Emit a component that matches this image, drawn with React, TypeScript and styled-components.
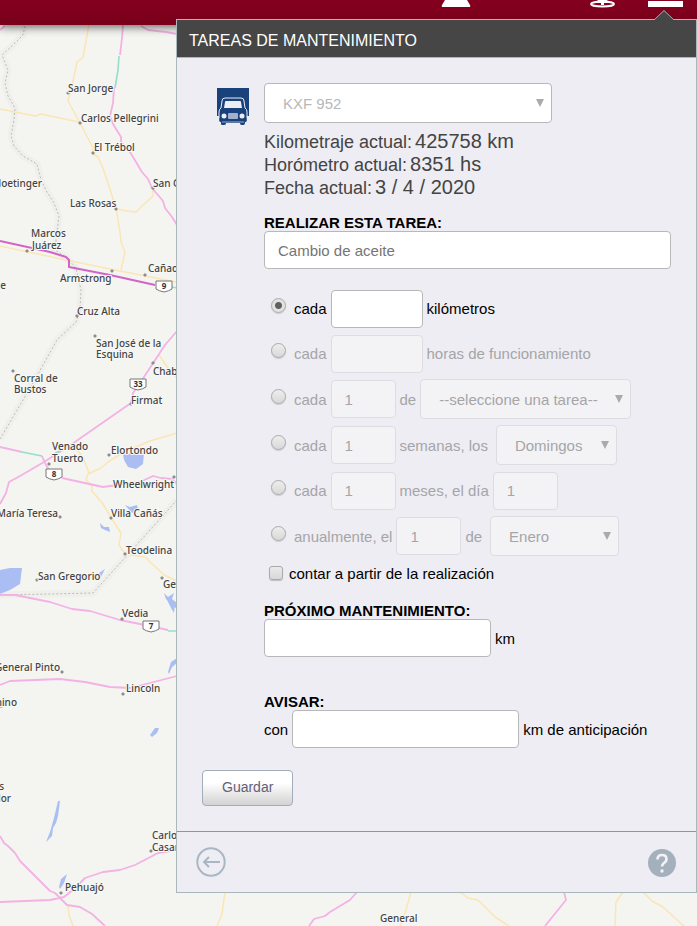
import React, { useState } from "react";
import styled, { createGlobalStyle } from "styled-components";

const GlobalStyle = createGlobalStyle`
  *, *::before, *::after { box-sizing: border-box; }
  body {
    margin: 0;
    background: #f4f5f0;
    font-family: "Liberation Sans", Arial, sans-serif;
    font-size: 15px;
    line-height: 17px;
    color: #000;
  }
  input, select, button { font: inherit; margin: 0; }
`;

const Page = styled.div`
  position: relative;
  min-height: 100vh;
  overflow: hidden;
  padding: 19px 0 33px 176px;
`;

const Backdrop = styled.div`
  position: absolute;
  inset: 0;
  isolation: isolate;
  display: flex;
  flex-direction: column;
`;

const TopBar = styled.header`
  flex: none;
  z-index: 1;
  display: flex;
  justify-content: flex-end;
  align-items: flex-start;
  height: 25px;
  padding-right: 14px;
  background: linear-gradient(#85001f, #780019);
  box-shadow: 0 2px 10px rgba(0, 0, 0, 0.6);
`;

const NavButton = styled.button<{ $gap?: number }>`
  display: block;
  padding: 0;
  margin-right: ${(p) => p.$gap ?? 0}px;
  border: 0;
  background: none;
  svg { display: block; }
`;

const MapArea = styled.div`
  position: absolute;
  inset: 0;
  svg { display: block; width: 100%; height: 100%; }
`;

const MapLabels = styled.g`
  font-family: "Noto Sans", sans-serif;
  font-size: 10px;
  font-weight: 500;
  fill: #444;
  paint-order: stroke;
  stroke: #f8f8f5;
  stroke-width: 2px;
`;

const Panel = styled.main`
  position: relative;
  border: 1px solid #a9b8bc;
  background: #eeedf3;
`;

const Notch = styled.svg`
  position: absolute;
  top: -10px;
  right: 22px;
`;

const TitleBar = styled.h1`
  margin: 0;
  padding: 12px 12px 7px;
  border-bottom: 1px solid #a9b8bc;
  background: #464646;
  color: #fff;
  font-size: 16px;
  font-weight: 400;
  line-height: 18px;
`;

const Form = styled.form`
  padding: 25px;
  border-bottom: 1px solid #8e969b;
`;

const Columns = styled.div`
  display: grid;
  grid-template-columns: 32px minmax(0, 1fr);
  column-gap: 15px;
  padding-left: 15px;
`;

const VehicleIcon = styled.svg`
  display: block;
  margin-top: 5px;
`;

const Readings = styled.dl`
  margin: 7px 0 15px;
  color: #444;
  font-size: 18px;
  line-height: 23px;
`;

const Reading = styled.div`
  display: flex;
  align-items: baseline;
  gap: 3px;
  height: 23px;
  dt, dd { margin: 0; }
  dd { font-size: 20px; }
`;

const Heading = styled.label`
  display: block;
  font-weight: 700;
`;

const TextBox = styled.input<{ $width?: string }>`
  display: block;
  flex: none;
  width: ${(p) => p.$width ?? "100%"};
  height: 38px;
  padding: 0 13px;
  border: 1px solid #b8b8b8;
  border-radius: 4px;
  background: #fff;
  color: #555;
  outline: none;
  &::placeholder { color: #757575; opacity: 1; }
  &:disabled {
    border-color: #dddde1;
    background: #f3f3f5;
    color: #a5a5a8;
  }
`;

const SelectWrap = styled.span<{ $width: number; $gap?: number }>`
  position: relative;
  display: block;
  flex: none;
  width: ${(p) => p.$width}px;
  max-width: 100%;
  margin-left: ${(p) => p.$gap ?? 0}px;
  color: #aaa;
  select {
    display: block;
    appearance: none;
    width: 100%;
    height: 40px;
    padding: 0 18px;
    border: 1px solid #b8b8b8;
    border-radius: 4px;
    background: #fff;
    color: #b8b8b8;
    outline: none;
    opacity: 1;
  }
  select:disabled {
    border-color: #dddde1;
    background: #f3f3f5;
    color: #a5a5a8;
  }
  svg {
    position: absolute;
    top: 16px;
    right: 8px;
    pointer-events: none;
  }
`;

const Schedule = styled.fieldset`
  margin: 17px 0 0;
  padding: 0;
  border: 0;
`;

const Row = styled.div<{ $muted?: boolean }>`
  display: flex;
  align-items: center;
  gap: 4px;
  min-height: 45px;
  padding: 3px 0;
  color: ${(p) => (p.$muted ? "#a5a5a8" : "#000")};
  white-space: nowrap;
`;

const Choice = styled.label`
  display: flex;
  align-items: center;
  gap: 8px;
  padding-left: 7px;
`;

const Radio = styled.input`
  appearance: none;
  width: 15px;
  height: 15px;
  margin-bottom: 6px;
  border: 1px solid #aaa;
  border-radius: 50%;
  background: linear-gradient(#eee, #d8d8d8);
  box-shadow: 0 1px 1px rgba(0, 0, 0, 0.15);
  &:checked {
    background: radial-gradient(circle, #606060 0 3px, #e2e2e2 4px);
  }
`;

const CheckLabel = styled.label`
  display: flex;
  align-items: center;
  gap: 6px;
  height: 28px;
  padding-left: 5px;
`;

const Checkbox = styled.input`
  appearance: none;
  width: 14px;
  height: 14px;
  border: 1px solid #aaa;
  border-radius: 3px;
  background: linear-gradient(#eaeaea, #d8d8d8);
  box-shadow: 0 1px 1px rgba(0, 0, 0, 0.2);
  &:checked { background: #606060; }
`;

const Section = styled.section<{ $top: number }>`
  margin-top: ${(p) => p.$top}px;
`;

const Inline = styled.div`
  display: flex;
  align-items: center;
  gap: 4px;
`;

const SaveButton = styled.button`
  display: block;
  height: 36px;
  margin-top: 22px;
  padding: 0 19px 2px;
  border: 1px solid #a3adb9;
  border-radius: 4px;
  background: linear-gradient(#fff 35%, #d2d2d2);
  color: #62607a;
  font-size: 14px;
`;

const Footer = styled.footer`
  display: flex;
  justify-content: space-between;
  align-items: center;
  padding: 15px 19px;
`;

const IconButton = styled.button`
  display: block;
  padding: 0;
  border: 0;
  background: none;
  svg { display: block; }
`;

type Label = [text: string, x: number, y: number, anchor?: "end"];

const places: Label[] = [
  ["San Jorge", 68, 92],
  ["Carlos Pellegrini", 81, 122],
  ["El Trébol", 94, 151],
  ["Noetinger", 42, 187, "end"],
  ["San Genaro", 153, 187],
  ["Las Rosas", 70, 207],
  ["Marcos", 31, 237],
  ["Juárez", 32, 249],
  ["Cañada de", 148, 272],
  ["Armstrong", 60, 282],
  ["Leones e", 6, 289, "end"],
  ["Cruz Alta", 77, 315],
  ["San José de la", 96, 347],
  ["Esquina", 96, 358],
  ["Chabás", 153, 375],
  ["Corral de", 14, 382],
  ["Bustos", 14, 393],
  ["Firmat", 131, 404],
  ["Venado", 52, 450],
  ["Tuerto", 52, 462],
  ["Elortondo", 111, 454],
  ["Wheelwright", 113, 488],
  ["María Teresa", 58, 517, "end"],
  ["Villa Cañás", 111, 517],
  ["Teodelina", 126, 554],
  ["San Gregorio", 38, 580],
  ["General", 163, 588],
  ["Vedia", 122, 617],
  ["General Pinto", 60, 671, "end"],
  ["Lincoln", 126, 692],
  ["Ameghino", 17, 706, "end"],
  ["Trenques", 4, 790, "end"],
  ["Salvador", 11, 802, "end"],
  ["Carlos", 152, 839],
  ["Casares", 152, 851],
  ["Pehuajó", 65, 891],
  ["General", 380, 922],
];

const yellowRoads = [
  "M89 25L83 57L77 62L72 86L68 101L79 121L93 148L93 154L98 157L103 168L116 208L120 232L121 242L125 252L121 270",
  "M0 109L35 116L41 114L79 122",
  "M117 209L127 211L136 212L153 196V189",
  "M0 246L66 260L120 271L176 282",
  "M177 433L150 441L124 452L108 462L101 468L88 474L86 480L92 486L92 491L103 504L112 519L121 533L119 545L125 554L145 557L164 575L177 581",
  "M75 446L84 460L89 473",
  "M159 355L168 368L177 378",
  "M68 906L69 915L73 926",
  "M225 892L222 914L217 926",
  "M411 892L406 910L400 926",
  "M460 892L468 898L478 900L495 917L509 926",
  "M623 892L616 902L615 926",
  "M643 892L652 901L663 907L676 919L684 926",
];

const pinkRoads = [
  "M123 25L122 38L120 55",
  "M114 88L113 103L110 116L113 124L121 137V142L130 152L142 172L148 179L152 188L163 201L165 208L172 217L177 225",
  "M141 26L148 30L166 32L177 34",
  "M0 30L5 26",
  "M177 331L165 345L142 380L133 393L131 403L72 444L44 462L20 476L9 482L6 493L0 504",
  "M0 447L22 452M42 456L45 463L50 472",
  "M62 478L103 487L140 482L153 476L161 478L172 479L177 484",
  "M0 595L15 595L50 602L72 609L90 611L120 620L140 624L168 630",
  "M0 685L10 681L60 679L85 682L110 687L130 688L150 683L177 676",
  "M0 836L4 843L8 846L15 853L20 861L50 891L55 893L67 905L80 907L92 914L105 926",
  "M0 902L50 900L64 897L74 889L85 878L103 872L120 870L135 865L158 853L177 850",
  "M357 892L350 900L330 912L325 916L314 919L309 926",
  "M564 892L566 900L545 926",
];

const borderLine =
  "M25 26L23 35L13 45L2 55L8 70L5 83L8 96L15 108L14 120L11 136L14 146L23 156L37 164L41 180L47 192L54 203L59 216L57 232L55 250L67 258L76 268L81 290L80 310L76 322L57 340L33 383L0 439M177 500L150 530L93 593L50 594L0 595";

const lakes = [
  "M123 454L144 453L143 464L136 469L128 467L124 460Z",
  "M125 505L130 507L137 505L138 509L132 513Z",
  "M100 523L104 527L109 527L110 532L105 530L101 528Z",
  "M0 570L10 568L22 568L20 584L10 590L0 594Z",
  "M98 580L99 573L105 569L101 577Z",
  "M164 593L168 597L174 593L172 599L177 603V609L172 605L166 599Z",
  "M167 600L172 601L175 604L174 613L171 608Z",
  "M168 672L171 662L177 658V663L172 667L169 674Z",
  "M150 735L155 728L159 728L157 733L152 737Z",
  "M58 801H60L58 816L56 823L53 828L52 836L46 842L50 832L54 818Z",
  "M59 887L61 879L67 874L64 883L60 889Z",
  "M0 706L4 705L2 708L0 708Z",
];

const towns = [
  [68, 93], [80, 123], [93, 153], [153, 188], [116, 209], [27, 251], [112, 271], [145, 275],
  [77, 316], [95, 336], [13, 371], [131, 404], [153, 363], [49, 464], [109, 455], [174, 477],
  [60, 517], [111, 518], [125, 554], [37, 580], [162, 578], [122, 619], [62, 672], [123, 694],
  [151, 851], [61, 893],
];

function Shield({ x, y, n }: { x: number; y: number; n: string }) {
  return (
    <g transform={`translate(${x} ${y})`}>
      <path d="M-8 -5H8V3Q5 5 0 6Q-5 5 -8 3Z" fill="#fff" stroke="#777" />
      <text y="3" textAnchor="middle" fontSize="8" fontWeight="700" fontFamily="Noto Sans, sans-serif" fill="#333">
        {n}
      </text>
    </g>
  );
}

function MapDrawing() {
  return (
    <svg viewBox="0 0 697 926" preserveAspectRatio="xMinYMin slice" aria-label="Mapa">
      <g fill="none" strokeLinejoin="round">
        <path d={borderLine} stroke="#efefeb" strokeWidth="7" />
        <path d={borderLine} stroke="#bbbbb8" strokeDasharray="2 2" />
        <path d={yellowRoads.join("")} stroke="#fce5b4" strokeWidth="1.5" />
        <path d={pinkRoads.join("")} stroke="#f4b1e6" strokeWidth="1.8" />
        <path
          d="M119 56L118 70L115 88M22 452L42 456M55 453L62 450M168 631H177M172 287L177 288"
          stroke="#95dfc9"
          strokeWidth="1.6"
        />
        <path d="M0 241L50 252L66 257L69 260V267L110 275L155 285" stroke="#d264c8" strokeWidth="2" />
      </g>
      <path d={lakes.join("")} fill="#aabef3" />
      {towns.map(([x, y]) => (
        <circle key={`${x}-${y}`} cx={x} cy={y} r="1.3" fill="#999" stroke="#777" strokeWidth="0.5" />
      ))}
      <MapLabels>
        {places.map(([text, x, y, anchor]) => (
          <text key={`${text}-${y}`} x={x} y={y} textAnchor={anchor ?? "start"}>
            {text}
          </text>
        ))}
      </MapLabels>
      <Shield x={164} y={286} n="9" />
      <Shield x={138} y={384} n="33" />
      <Shield x={54} y={474} n="8" />
      <Shield x={151} y={626} n="7" />
    </svg>
  );
}

function Truck() {
  return (
    <VehicleIcon width="32" height="37" viewBox="0 0 32 37" aria-label="Camión">
      <path d="M0 0H32V28H0Z" fill="#19417c" />
      <path d="M5 13Q5 10 8 10H24Q27 10 27 13L28 20Q30 21 30 24V33Q30 34 28 34V36Q28 37 26 37H25Q23 37 23 36V35H9V36Q9 37 7 37H6Q4 37 4 36V34Q2 34 2 33V24Q2 21 4 20Z" fill="#19417c" stroke="#eeedf3" />
      <path d="M2.5 30V33Q2.500 34 4 34V36Q4 37 6 37H7Q9 37 9 35H23Q23 37 25 37H26Q28 37 28 34Q29.500 34 29.500 33V30Z" fill="#19417c" />
      <path d="M8 14Q8 13 9 13H23Q24 13 24 14L25 20H7Z" fill="#eeedf3" />
      <circle cx="7" cy="28" r="2.500" fill="#eeedf3" />
      <circle cx="25" cy="28" r="2.500" fill="#eeedf3" />
      <rect x="11" y="25" width="10" height="6" rx="1" fill="#9fb1cc" />
      <path d="M5 34H27" stroke="#9fb1cc" />
    </VehicleIcon>
  );
}

type DropDownProps = {
  label: string;
  option: string;
  width: number;
  gap?: number;
  disabled?: boolean;
};

function DropDown({ label, option, width, gap, disabled }: DropDownProps) {
  return (
    <SelectWrap $width={width} $gap={gap}>
      <select aria-label={label} disabled={disabled}>
        <option>{option}</option>
      </select>
      <svg width="8" height="8" viewBox="0 0 8 8" aria-hidden="true">
        <path d="M0 0H8L4 8Z" fill="currentColor" />
      </svg>
    </SelectWrap>
  );
}

export default function App() {
  const [mode, setMode] = useState(0);
  const off = (i: number) => mode !== i;

  const choice = (i: number, text: string) => (
    <Choice>
      <Radio type="radio" name="frecuencia" checked={mode === i} onChange={() => setMode(i)} />
      {text}
    </Choice>
  );

  return (
    <>
      <GlobalStyle />
      <Page>
        <Backdrop>
          <MapArea>
            <MapDrawing />
          </MapArea>
          <TopBar>
            <NavButton type="button" aria-label="Alertas" $gap={118}>
              <svg width="30" height="8" viewBox="0 0 30 8">
                <path d="M4 0H26L29 5Q30 7 28 7H2Q0 7 1 5Z" fill="#fff" />
              </svg>
            </NavButton>
            <NavButton type="button" aria-label="Posición" $gap={32}>
              <svg width="27" height="8" viewBox="0 0 27 8">
                <path d="M9 0H18L20 3H7Z" fill="#fff" />
                <ellipse cx="13.500" cy="4" rx="11.500" ry="2.500" fill="none" stroke="#fff" strokeWidth="2" />
                <path d="M12 2H15V5H12Z" fill="#fff" />
              </svg>
            </NavButton>
            <NavButton type="button" aria-label="Menú">
              <svg width="35" height="8" viewBox="0 0 35 8">
                <path d="M0 1H35V7H0Z" fill="#fff" />
              </svg>
            </NavButton>
          </TopBar>
        </Backdrop>

        <Panel>
          <Notch width="20" height="11" viewBox="0 0 20 11" aria-hidden="true">
            <path d="M0 10L10 0L20 10V11H0Z" fill="#464646" />
            <path d="M0 10L10 0.500L20 10" fill="none" stroke="#a9a9ac" />
          </Notch>
          <TitleBar>TAREAS DE MANTENIMIENTO</TitleBar>

          <Form onSubmit={(e) => e.preventDefault()}>
            <Columns>
              <Truck />
              <div>
                <DropDown label="Vehículo" option="KXF 952" width={288} />
                <Readings>
                  <Reading><dt>Kilometraje actual:</dt><dd>425758 km</dd></Reading>
                  <Reading><dt>Horómetro actual:</dt><dd>8351 hs</dd></Reading>
                  <Reading><dt>Fecha actual:</dt><dd>3 / 4 / 2020</dd></Reading>
                </Readings>

                <Heading htmlFor="tarea">REALIZAR ESTA TAREA:</Heading>
                <TextBox id="tarea" placeholder="Cambio de aceite" />

                <Schedule aria-label="Frecuencia">
                  <Row $muted={off(0)}>
                    {choice(0, "cada")}
                    <TextBox $width="92px" aria-label="Kilómetros" disabled={off(0)} />
                    <span>kilómetros</span>
                  </Row>
                  <Row $muted={off(1)}>
                    {choice(1, "cada")}
                    <TextBox $width="92px" aria-label="Horas" disabled={off(1)} />
                    <span>horas de funcionamiento</span>
                  </Row>
                  <Row $muted={off(2)}>
                    {choice(2, "cada")}
                    <TextBox $width="65px" aria-label="Cantidad" defaultValue="1" disabled={off(2)} />
                    <span>de</span>
                    <DropDown label="Tarea" option="--seleccione una tarea--" width={211} disabled={off(2)} />
                  </Row>
                  <Row $muted={off(3)}>
                    {choice(3, "cada")}
                    <TextBox $width="65px" aria-label="Semanas" defaultValue="1" disabled={off(3)} />
                    <span>semanas, los</span>
                    <DropDown label="Día de la semana" option="Domingos" width={121} gap={4} disabled={off(3)} />
                  </Row>
                  <Row $muted={off(4)}>
                    {choice(4, "cada")}
                    <TextBox $width="65px" aria-label="Meses" defaultValue="1" disabled={off(4)} />
                    <span>meses, el día</span>
                    <TextBox $width="65px" aria-label="Día" defaultValue="1" disabled={off(4)} />
                  </Row>
                  <Row $muted={off(5)}>
                    {choice(5, "anualmente, el")}
                    <TextBox $width="65px" aria-label="Día del mes" defaultValue="1" disabled={off(5)} />
                    <span>de</span>
                    <DropDown label="Mes" option="Enero" width={129} gap={4} disabled={off(5)} />
                  </Row>
                </Schedule>

                <CheckLabel>
                  <Checkbox type="checkbox" />
                  contar a partir de la realización
                </CheckLabel>

                <Section $top={15}>
                  <Heading htmlFor="proximo">PRÓXIMO MANTENIMIENTO:</Heading>
                  <Inline>
                    <TextBox id="proximo" $width="227px" />
                    <span>km</span>
                  </Inline>
                </Section>

                <Section $top={36}>
                  <Heading htmlFor="avisar">AVISAR:</Heading>
                  <Inline>
                    <span>con</span>
                    <TextBox id="avisar" $width="227px" />
                    <span>km de anticipación</span>
                  </Inline>
                </Section>
              </div>
            </Columns>
            <SaveButton type="submit">Guardar</SaveButton>
          </Form>

          <Footer>
            <IconButton type="button" aria-label="Volver">
              <svg width="30" height="30" viewBox="0 0 30 30" fill="none" stroke="#a9b6c4" strokeWidth="2">
                <circle cx="15" cy="15" r="13.700" />
                <path d="M24 15H8M13 10L8 15L13 20" />
              </svg>
            </IconButton>
            <IconButton type="button" aria-label="Ayuda">
              <svg width="30" height="30" viewBox="0 0 30 30">
                <circle cx="15" cy="16" r="14" fill="#a4b1bd" />
                <path d="M10.500 12.500Q10.500 8 15 8Q19.500 8 19.500 12Q19.500 14.500 17 16Q15 17.500 15 19.500" fill="none" stroke="#f3f3f6" strokeWidth="2.600" />
                <circle cx="15" cy="24" r="1.700" fill="#f3f3f6" />
              </svg>
            </IconButton>
          </Footer>
        </Panel>
      </Page>
    </>
  );
}
